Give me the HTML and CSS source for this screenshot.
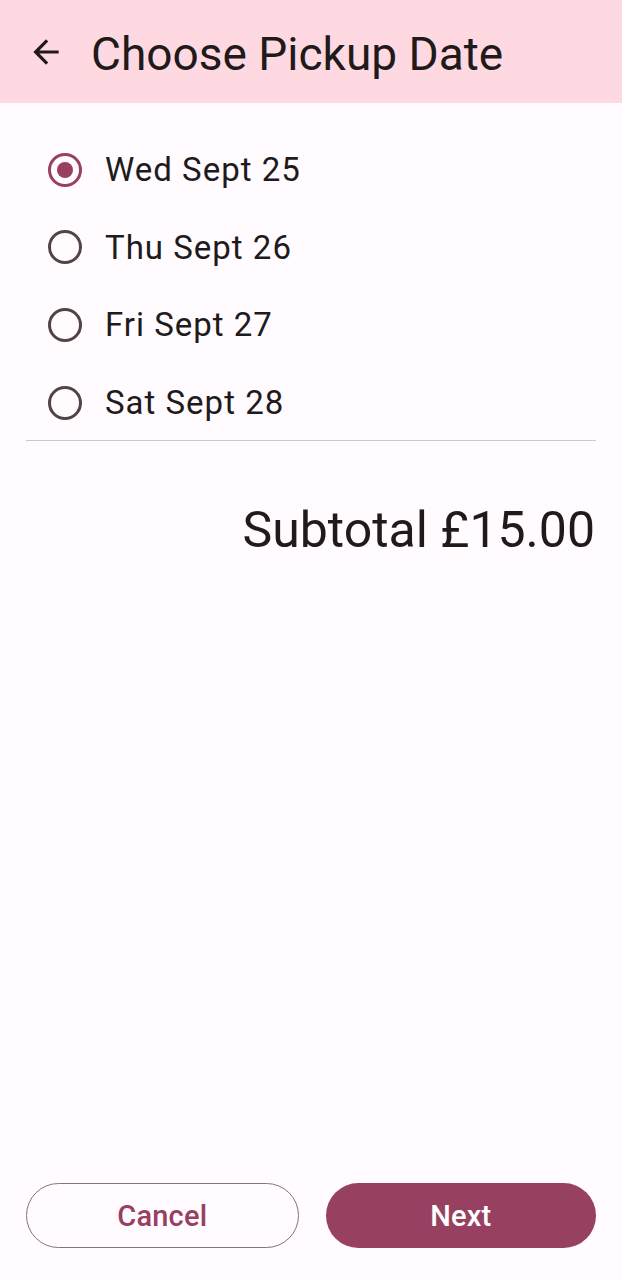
FILE: index.html
```html
<!DOCTYPE html>
<html>
<head>
<meta charset="utf-8">
<link rel="stylesheet" href="styles.css">
</head>
<body>
<div class="screen">
  <header class="topbar">
    <span class="back">
      <svg width="38" height="38" viewBox="0 0 24 24"><path d="M20 11H7.83l5.59-5.59L12 4l-8 8 8 8 1.41-1.41L7.83 13H20v-2z" fill="#201a1b"/></svg>
    </span>
    <h1 class="title">Choose Pickup Date</h1>
  </header>
  <main class="content">
    <ul class="options">
      <li class="option"><span class="radio checked"></span><span class="label">Wed Sept 25</span></li>
      <li class="option"><span class="radio"></span><span class="label">Thu Sept 26</span></li>
      <li class="option"><span class="radio"></span><span class="label">Fri Sept 27</span></li>
      <li class="option"><span class="radio"></span><span class="label">Sat Sept 28</span></li>
    </ul>
    <hr class="divider">
    <div class="subtotal">Subtotal £15.00</div>
  </main>
  <footer class="actions">
    <button class="btn outline">Cancel</button>
    <button class="btn filled">Next</button>
  </footer>
</div>
</body>
</html>
```
FILE: styles.css
```css
* { box-sizing: border-box; }
html, body { margin: 0; padding: 0; }
body {
  font-family: Roboto, "Noto Sans", sans-serif;
  background: #fffbff;
  color: #201a1b;
}
.screen {
  width: 622px;
  height: 1280px;
  display: flex;
  flex-direction: column;
}
.topbar {
  height: 103px;
  background: #ffd9e2;
  display: flex;
  align-items: center;
  padding-left: 27px;
}
.back {
  width: 38px;
  height: 38px;
  display: flex;
}
.title {
  margin: 0 0 0 26px;
  font-size: 46px;
  font-weight: 400;
  line-height: 1;
  position: relative;
  top: 2px;
}
.content {
  flex: 1;
  padding: 0 26px;
}
.options {
  list-style: none;
  margin: 0;
  padding: 28px 0 0;
}
.option {
  height: 77.6px;
  display: flex;
  align-items: center;
  padding-left: 22px;
}
.radio {
  width: 34px;
  height: 34px;
  border: 3.2px solid #524345;
  border-radius: 50%;
  display: flex;
  align-items: center;
  justify-content: center;
  flex: none;
}
.radio.checked { border-color: #984061; }
.radio.checked::after {
  content: "";
  width: 16px;
  height: 16px;
  border-radius: 50%;
  background: #984061;
}
.label {
  margin-left: 23px;
  font-size: 33px;
  letter-spacing: 1px;
  color: #201a1b;
}
.divider {
  margin: 0;
  border: none;
  border-top: 1.6px solid #cdc8cb;
  margin-top: -1px;
}
.subtotal {
  text-align: right;
  font-size: 50px;
  line-height: 1;
  margin-top: 64px;
  padding-right: 1px;
}
.actions {
  display: flex;
  gap: 27px;
  padding: 0 26px 32px;
}
.btn {
  flex: 1;
  height: 65px;
  border-radius: 33px;
  font-family: Roboto, sans-serif;
  font-size: 29px;
  font-weight: 500;
  letter-spacing: 0.2px;
}
.btn.outline {
  background: transparent;
  border: 1.6px solid #857375;
  color: #984061;
}
.btn.filled {
  background: #984061;
  border: none;
  color: #ffffff;
}
```
